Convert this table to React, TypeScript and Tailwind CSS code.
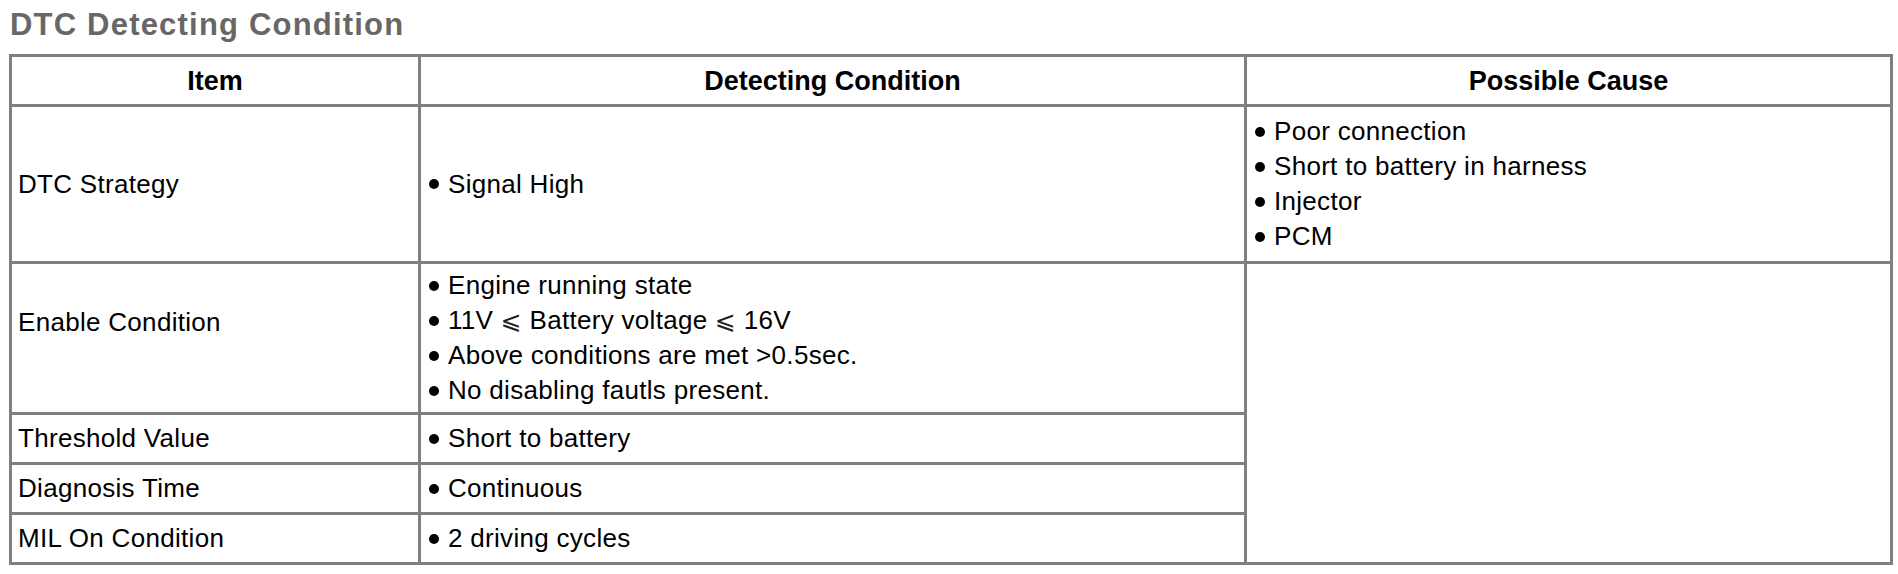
import React from "react";

const font = { fontFamily: '"Liberation Sans", Arial, "DejaVu Sans", sans-serif' };

function Bullets({ items }: { items: React.ReactNode[] }) {
  return (
    <ul className="flex flex-col">
      {items.map((it, i) => (
        <li key={i} className="flex items-center leading-[35px] h-[35px]">
          <span className="inline-block w-[10px] h-[10px] rounded-full bg-black shrink-0" />
          <span className="ml-[9px] whitespace-nowrap">{it}</span>
        </li>
      ))}
    </ul>
  );
}

function Head({ children }: { children: React.ReactNode }) {
  return (
    <div className="bg-white flex items-center justify-center font-bold text-[27px] leading-[30px] text-black">
      {children}
    </div>
  );
}

function ItemCell({ children }: { children: React.ReactNode }) {
  return (
    <div className="bg-white flex items-center pl-[6px] text-[26px] tracking-[0.3px] text-black whitespace-nowrap">
      {children}
    </div>
  );
}

function ListCell({ items }: { items: React.ReactNode[] }) {
  return (
    <div className="bg-white flex items-center pl-[8px] text-[26px] tracking-[0.3px] text-black">
      <Bullets items={items} />
    </div>
  );
}

export default function App() {
  return (
    <div className="bg-white w-[1898px] h-[574px] overflow-hidden" style={font}>
      <div className="h-[54px] pt-[7px] pl-[10px] text-[31px] leading-[36px] font-bold tracking-[1.2px] text-[#676767] whitespace-nowrap">
        DTC Detecting Condition
      </div>
      <div className="ml-[9px] w-[1884px] grid grid-cols-[406px_823px_643px] grid-rows-[47px_154px_148px_47px_47px_47px] gap-[3px] p-[3px] bg-[#808080]">
        <Head>Item</Head>
        <Head>Detecting Condition</Head>
        <Head>Possible Cause</Head>

        <ItemCell>DTC Strategy</ItemCell>
        <ListCell items={["Signal High"]} />
        <ListCell items={["Poor connection", "Short to battery in harness", "Injector", "PCM"]} />

        <div className="bg-white flex items-center pl-[6px] pb-[32px] text-[26px] tracking-[0.3px] text-black whitespace-nowrap">
          Enable Condition
        </div>
        <ListCell
          items={[
            "Engine running state",
            <span key="v">
              11V <span style={{ fontFamily: '"DejaVu Sans", sans-serif' }} className="text-[25px] text-[#222]">⩽</span> Battery voltage{" "}
              <span style={{ fontFamily: '"DejaVu Sans", sans-serif' }} className="text-[25px] text-[#222]">⩽</span> 16V
            </span>,
            "Above conditions are met >0.5sec.",
            "No disabling fautls present.",
          ]}
        />
        <div className="bg-white col-start-3 row-start-3 row-span-4" />

        <div className="bg-white col-start-1 row-start-4 flex items-center pl-[6px] text-[26px] tracking-[0.3px] text-black whitespace-nowrap">
          Threshold Value
        </div>
        <div className="col-start-2 row-start-4 bg-white flex items-center pl-[8px] text-[26px] tracking-[0.3px] text-black">
          <Bullets items={["Short to battery"]} />
        </div>

        <div className="bg-white col-start-1 row-start-5 flex items-center pl-[6px] text-[26px] tracking-[0.3px] text-black whitespace-nowrap">
          Diagnosis Time
        </div>
        <div className="col-start-2 row-start-5 bg-white flex items-center pl-[8px] text-[26px] tracking-[0.3px] text-black">
          <Bullets items={["Continuous"]} />
        </div>

        <div className="bg-white col-start-1 row-start-6 flex items-center pl-[6px] text-[26px] tracking-[0.3px] text-black whitespace-nowrap">
          MIL On Condition
        </div>
        <div className="col-start-2 row-start-6 bg-white flex items-center pl-[8px] text-[26px] tracking-[0.3px] text-black">
          <Bullets items={["2 driving cycles"]} />
        </div>
      </div>
    </div>
  );
}
